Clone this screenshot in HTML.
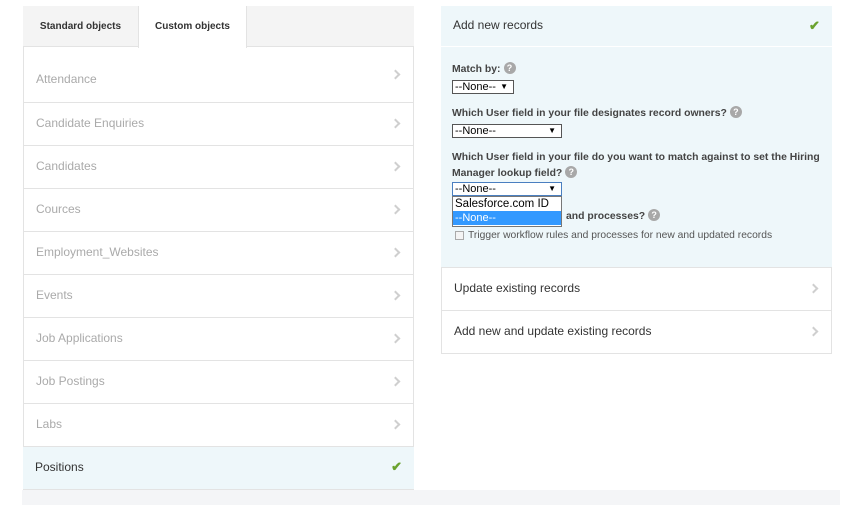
<!DOCTYPE html>
<html><head><meta charset="utf-8"><style>
*{margin:0;padding:0;box-sizing:border-box}
body{width:862px;height:505px;background:#fff;font-family:"Liberation Sans",Arial,sans-serif;position:relative;overflow:hidden}
.a{position:absolute}
.row{position:absolute;left:23px;width:391px;border-bottom:1px solid #e3e3e3;border-left:1px solid #e3e3e3;border-right:1px solid #e3e3e3;font-size:12px;color:#aaa;padding-left:12px}
.chev{position:absolute;right:14px;top:50%;margin-top:-4px;width:7px;height:7px;border-right:2px solid #cfcfcf;border-top:2px solid #cfcfcf;transform:rotate(45deg)}
.chk{position:absolute;color:#6aa22e;font-size:13px;font-weight:bold;line-height:16px}
.lbl{position:absolute;left:452px;font-size:10.4px;font-weight:bold;color:#444}
.q{display:inline-block;width:12px;height:12px;border-radius:50%;background:#a8a8a8;color:#fff;font-size:9px;text-align:center;line-height:12px;vertical-align:1px;margin-left:3px}
.sel{position:absolute;left:452px;height:14px;border:1px solid #555;background:#fff;font-size:11px;color:#000;padding-left:2px;line-height:12px}
.sel b{position:absolute;right:5px;top:0;font-size:8px}
</style></head><body>
<div class="a" style="left:23px;top:6px;width:391px;height:41px;background:#f4f4f4;border-bottom:1px solid #e3e3e3"></div>
<div class="a" style="left:23px;top:7px;width:115px;height:41px;font-size:10px;font-weight:bold;color:#333;text-align:center;line-height:40px">Standard objects</div>
<div class="a" style="left:138px;top:6px;width:109px;height:42px;background:#fff;border-left:1px solid #e3e3e3;border-right:1px solid #e3e3e3;font-size:10px;font-weight:bold;color:#333;text-align:center;line-height:42px">Custom objects</div>
<div class="row" style="top:47px;height:56px;line-height:64px;border-top:0">Attendance<span class="chev"></span></div>
<div class="row" style="top:103px;height:43px;line-height:40px">Candidate Enquiries<span class="chev"></span></div>
<div class="row" style="top:146px;height:43px;line-height:40px">Candidates<span class="chev"></span></div>
<div class="row" style="top:189px;height:43px;line-height:40px">Cources<span class="chev"></span></div>
<div class="row" style="top:232px;height:43px;line-height:40px">Employment_Websites<span class="chev"></span></div>
<div class="row" style="top:275px;height:43px;line-height:40px">Events<span class="chev"></span></div>
<div class="row" style="top:318px;height:43px;line-height:40px">Job Applications<span class="chev"></span></div>
<div class="row" style="top:361px;height:43px;line-height:40px">Job Postings<span class="chev"></span></div>
<div class="row" style="top:404px;height:43px;line-height:40px">Labs<span class="chev"></span></div>
<div class="row" style="top:447px;height:43px;line-height:40px;background:#eef7fa;color:#333;border-left:0;border-right:0">Positions<span class="chk" style="right:12px;top:12px">✔</span></div>
<div class="a" style="left:22px;top:490px;width:818px;height:15px;background:#f4f5f7"></div>

<div class="a" style="left:441px;top:6px;width:391px;height:262px;background:#eef7fa;border-bottom:1px solid #e3e3e3"></div>
<div class="a" style="left:441px;top:46px;width:391px;height:1px;background:#fff"></div>
<div class="a" style="left:453px;top:18px;font-size:12px;color:#333">Add new records</div>
<span class="chk" style="left:809px;top:18px">✔</span>
<div class="lbl" style="top:62px">Match by:<span class="q">?</span></div>
<div class="sel" style="top:80px;width:62px">--None--<b>▼</b></div>
<div class="lbl" style="top:106px">Which User field in your file designates record owners?<span class="q">?</span></div>
<div class="sel" style="top:124px;width:110px">--None--<b>▼</b></div>
<div class="lbl" style="top:150px;line-height:16px;width:385px">Which User field in your file do you want to match against to set the Hiring Manager lookup field?<span class="q">?</span></div>
<div class="sel" style="top:182px;width:110px;border-color:#4a7fc0">--None--<b>▼</b></div>
<div class="a" style="left:452px;top:196px;width:110px;height:31px;border:1px solid #777;background:#fff;font-size:11.5px">
<div style="height:14px;line-height:14px;padding-left:2px;color:#000">Salesforce.com ID</div>
<div style="height:14px;line-height:14px;padding-left:2px;background:#3399ff;color:#fff;font-size:11px">--None--</div></div>
<div class="lbl" style="left:566px;top:209px">and processes?<span class="q">?</span></div>
<div class="a" style="left:455px;top:231px;width:9px;height:9px;border:1px solid #aaa;background:#f4f4f4"></div>
<div class="a" style="left:468px;top:230px;font-size:10.3px;color:#555">Trigger workflow rules and processes for new and updated records</div>
<div class="a" style="left:441px;top:268px;width:391px;height:43px;border:1px solid #e3e3e3;border-top:0;font-size:12px;color:#333;padding-left:12px;line-height:40px">Update existing records<span class="chev"></span></div>
<div class="a" style="left:441px;top:311px;width:391px;height:43px;border:1px solid #e3e3e3;border-top:0;font-size:12px;color:#333;padding-left:12px;line-height:40px">Add new and update existing records<span class="chev"></span></div>
</body></html>
